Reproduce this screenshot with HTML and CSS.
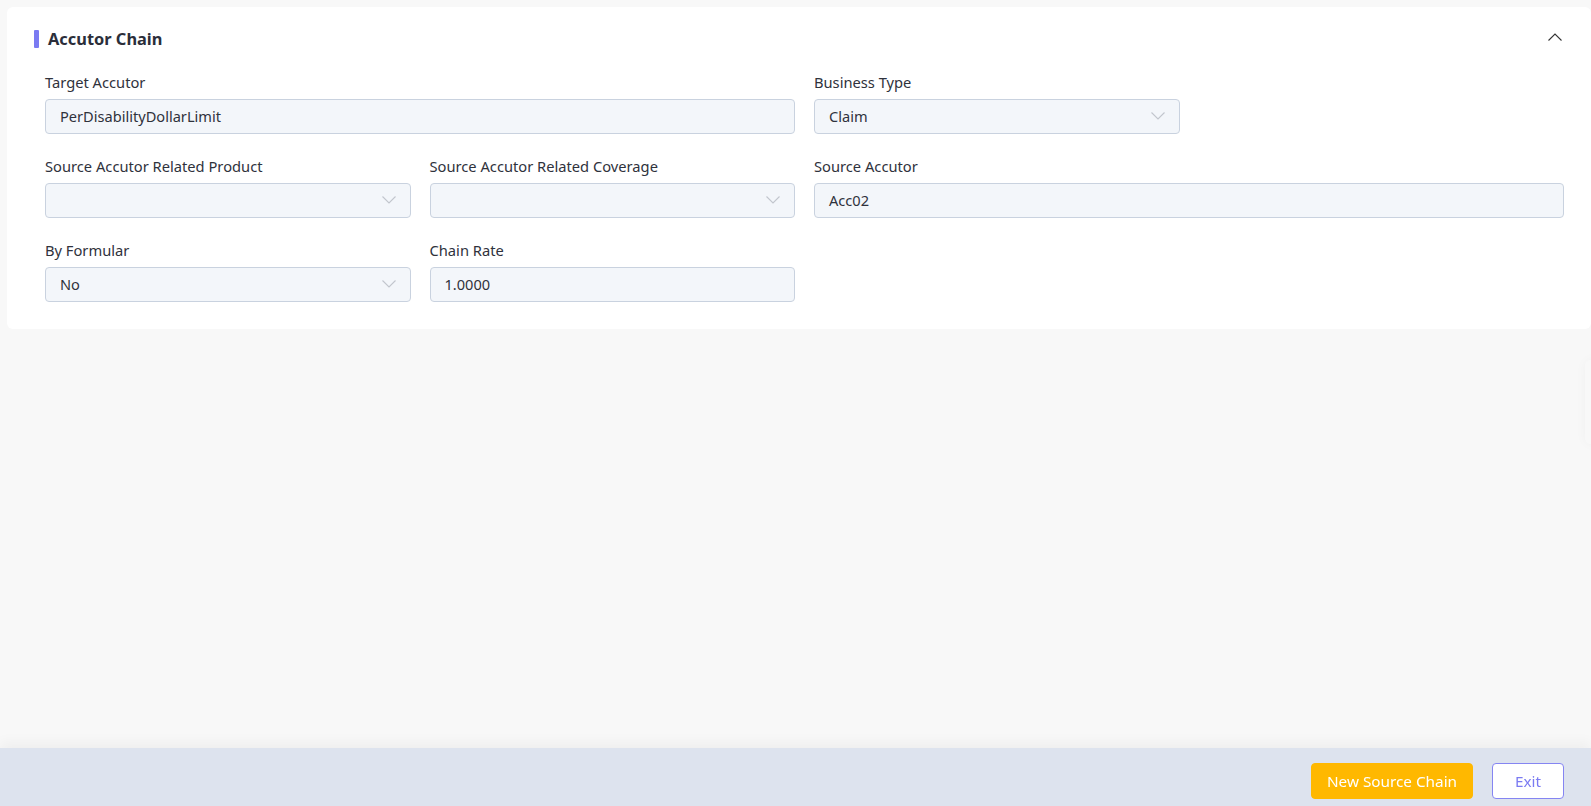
FILE: index.html
```html
<!DOCTYPE html>
<html lang="en">
<head>
  <meta charset="UTF-8">
  <meta name="viewport" content="width=device-width, initial-scale=1.0">
  <title>Accutor Chain</title>
  <link rel="stylesheet" href="styles.css">
</head>
<body>
  <div class="card">
    <div class="card-head">
      <h2 class="card-title">Accutor Chain</h2>
      <svg class="collapse" width="14" height="8" viewBox="0 0 14 8"><path d="M0.5 7.5 L7 1 L13.5 7.5" fill="none" stroke="#333" stroke-width="1.1"/></svg>
    </div>

    <div class="form">
      <div class="field span2">
        <label>Target Accutor</label>
        <div class="box">PerDisabilityDollarLimit</div>
      </div>
      <div class="field">
        <label>Business Type</label>
        <div class="box select">Claim<svg class="arrow" width="14" height="8" viewBox="0 0 14 8"><path d="M0.5 0.5 L7 7 L13.5 0.5" fill="none" stroke="#c2c6cd" stroke-width="1.1"/></svg></div>
      </div>
      <div class="field empty"></div>

      <div class="field">
        <label>Source Accutor Related Product</label>
        <div class="box select"><svg class="arrow" width="14" height="8" viewBox="0 0 14 8"><path d="M0.5 0.5 L7 7 L13.5 0.5" fill="none" stroke="#c2c6cd" stroke-width="1.1"/></svg></div>
      </div>
      <div class="field">
        <label>Source Accutor Related Coverage</label>
        <div class="box select"><svg class="arrow" width="14" height="8" viewBox="0 0 14 8"><path d="M0.5 0.5 L7 7 L13.5 0.5" fill="none" stroke="#c2c6cd" stroke-width="1.1"/></svg></div>
      </div>
      <div class="field span2">
        <label>Source Accutor</label>
        <div class="box">Acc02</div>
      </div>

      <div class="field">
        <label>By Formular</label>
        <div class="box select">No<svg class="arrow" width="14" height="8" viewBox="0 0 14 8"><path d="M0.5 0.5 L7 7 L13.5 0.5" fill="none" stroke="#c2c6cd" stroke-width="1.1"/></svg></div>
      </div>
      <div class="field">
        <label>Chain Rate</label>
        <div class="box">1.0000</div>
      </div>
    </div>
  </div>

  <div class="side-tab"></div>

  <div class="footer">
    <button class="btn btn-primary">New Source Chain</button>
    <button class="btn btn-ghost">Exit</button>
  </div>
</body>
</html>
```

FILE: styles.css
```css
body {
  margin: 0;
  background: #f8f8f8;
  color: #333;
  font-family: 'Noto Sans', 'Open Sans', sans-serif;
  font-size: 14.6px;
  height: 806px;
  overflow: hidden;
}
.card {
  margin: 7px 0 0 7px;
  background: #fff;
  border-radius: 6px;
  padding: 22px 27px 27px 27px;
}
.card-head {
  display: flex;
  justify-content: space-between;
  align-items: center;
  height: 20px;
}
.card-title {
  margin: 0;
  font-size: 16.4px;
  font-weight: bold;
  line-height: 20px;
  color: #2b2e3a;
  display: flex;
  align-items: center;
  gap: 9px;
}
.card-title::before {
  content: '';
  width: 5px;
  height: 18px;
  background: #7b7bf2;
  border-radius: 1px;
}
.collapse {
  margin-right: 2px;
  margin-top: -4px;
}
.form {
  display: grid;
  grid-template-columns: repeat(4, 1fr);
  column-gap: 19px;
  row-gap: 21px;
  margin-top: 22px;
  padding-left: 11px;
}
.span2 {
  grid-column: span 2;
}
.field label {
  display: block;
  font-size: 14.7px;
  line-height: 22px;
  margin-bottom: 6px;
  color: #2f323c;
}
.box {
  position: relative;
  height: 35px;
  box-sizing: border-box;
  border: 1px solid #c9d2df;
  border-radius: 4px;
  background: #f3f6fa;
  padding: 0 14px;
  line-height: 33px;
  color: #2f323c;
}
.arrow {
  position: absolute;
  right: 14px;
  top: 12px;
}
.side-tab {
  position: fixed;
  right: -40px;
  top: 360px;
  width: 46px;
  height: 84px;
  background: #f8f8f8;
  border-radius: 6px;
  box-shadow: 0 0 12px rgba(0, 0, 0, 0.035);
}
.footer {
  position: fixed;
  left: 0;
  right: 0;
  bottom: 0;
  height: 58px;
  background: #dde3ee;
  box-shadow: 0 -6px 12px rgba(0, 0, 0, 0.04);
  display: flex;
  justify-content: flex-end;
  align-items: flex-start;
  gap: 19px;
  padding: 15px 27px 0 0;
  box-sizing: border-box;
}
.btn {
  height: 36px;
  border-radius: 4px;
  font-family: inherit;
  font-size: 15.3px;
  white-space: nowrap;
  cursor: pointer;
  padding: 0;
}
.btn-primary {
  background: #ffb800;
  border: 1px solid #ffb800;
  color: #fff;
  width: 162px;
}
.btn-ghost {
  background: #fff;
  border: 1px solid #8585f2;
  color: #7b7bf2;
  width: 72px;
}
```
